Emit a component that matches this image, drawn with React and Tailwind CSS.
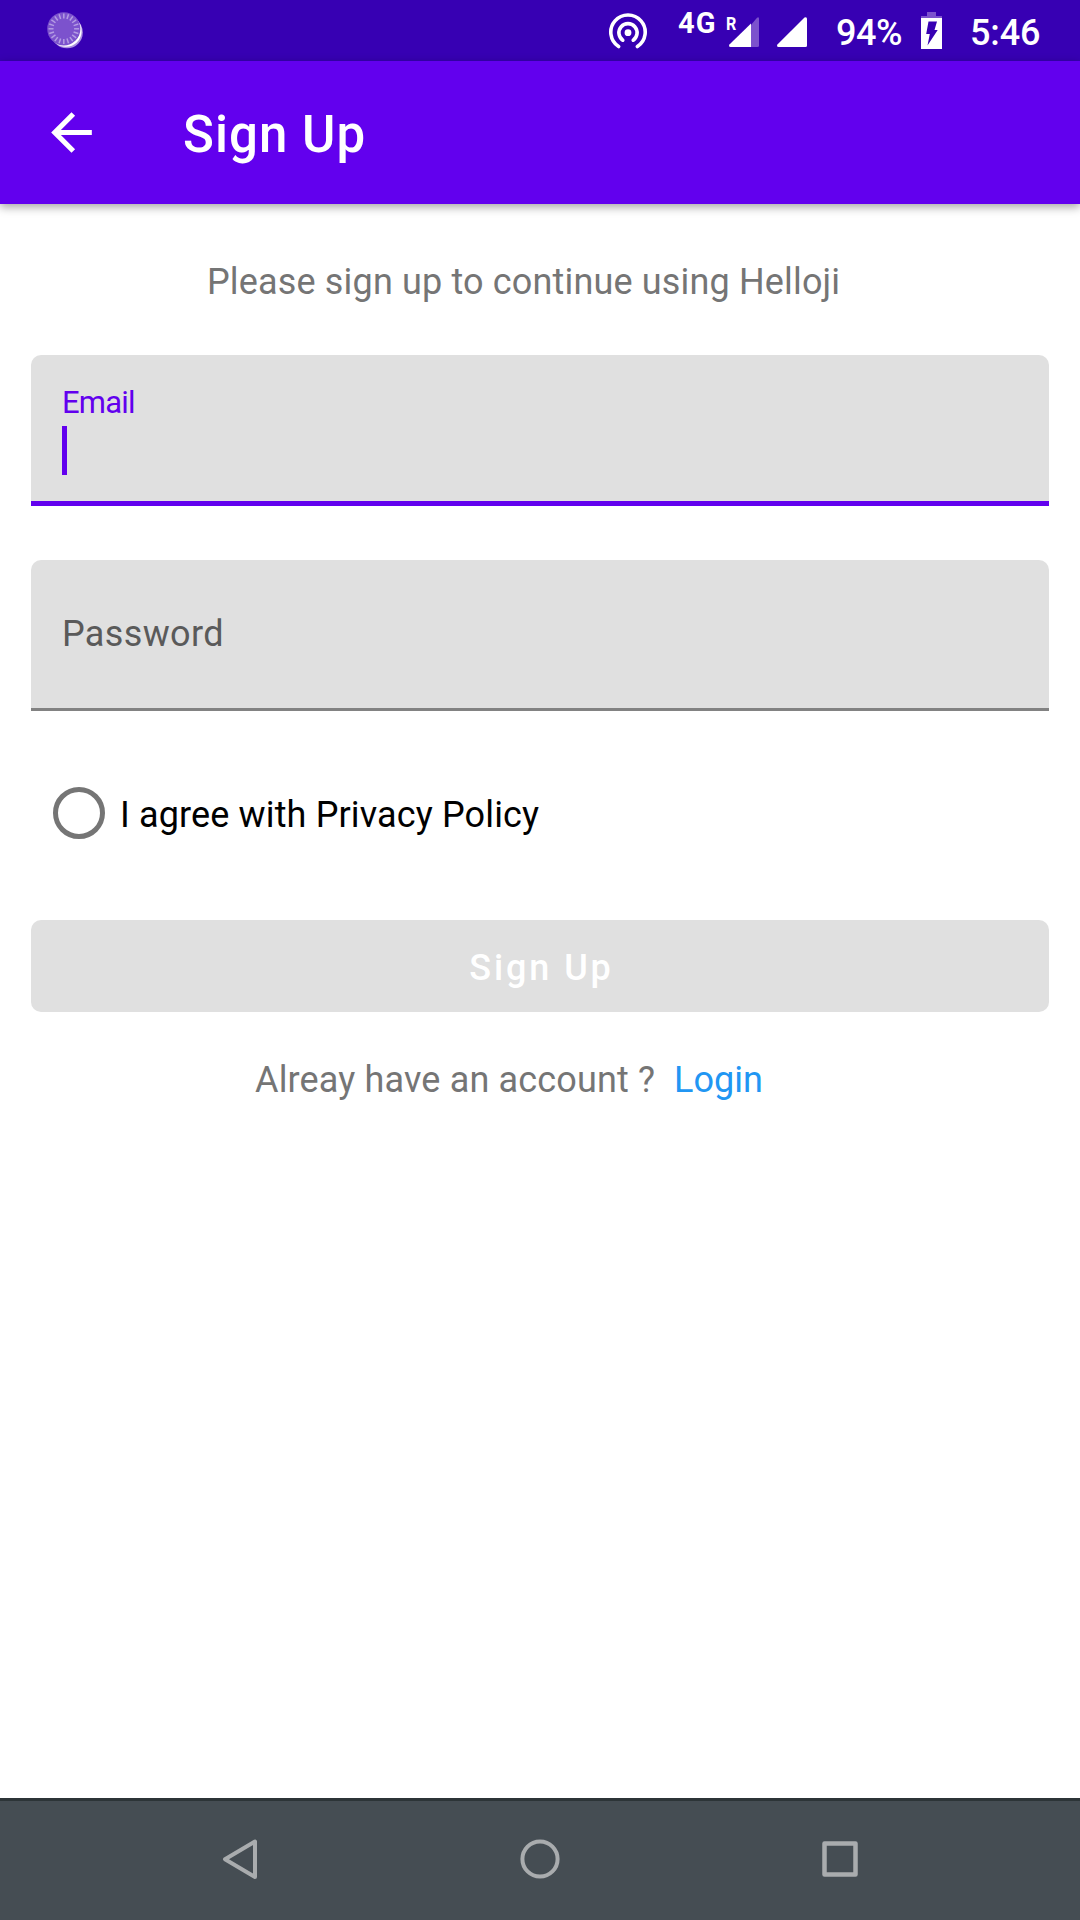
const TICKS = Array.from({ length: 20 }, (_, i) => i * 18);

function StatusBar() {
  return (
    <div className="flex h-[61px] shrink-0 items-start bg-[#3700b3] text-white">
      <svg className="ml-[44px] h-[61px] w-[44px]" viewBox="44 0 44 61">
        <circle cx="67" cy="32.5" r="15.8" fill="#ab8fe0" />
        <circle cx="65.8" cy="31" r="15.8" fill="#fff" />
        <circle cx="63.8" cy="28.8" r="16.6" fill="#7c52cd" />
        {TICKS.map((a) => (
          <line key={a} x1="63.8" y1="13.5" x2="63.8" y2="18.5" stroke="#b49ce3" strokeWidth="1.5" transform={`rotate(${a} 63.8 28.8)`} />
        ))}
      </svg>
      <svg className="ml-[520px] h-[61px] w-[40px]" viewBox="608 0 40 61" fill="none" stroke="#fff" strokeWidth="3.6" strokeLinecap="round">
        <circle cx="628" cy="32.7" r="3.4" fill="#fff" stroke="none" />
        <path d="M622.8 40.2a9.1 9.1 0 1 1 10.4 0" />
        <path d="M618.6 46.6a17.2 17.2 0 1 1 18.8 0" />
      </svg>
      <span className="mt-[8px] ml-[30px] w-[48px] text-[29px] leading-[30px] font-bold tracking-[1px]">4G</span>
      <span className="mt-[14px] w-[15px] origin-left scale-x-[.87] text-[18.5px] leading-[20px] font-bold">R</span>
      <svg className="-ml-[16px] h-[61px] w-[85px]" viewBox="725 0 85 61">
        <path d="M751 25L757 17.8q2-1.5 2 1V45.5q0 1.5-1.5 1.5H751z" fill="#7c52cd" />
        <path d="M751 23.5V47H730.5q-2.5-.5-.8-2.8z" fill="#fff" />
        <path d="M778.5 47q-2.5-.5-.8-2.8L804.5 17.5q2.5-1 2.5 1.3V45.5q0 1.5-1.5 1.5z" fill="#fff" />
      </svg>
      <span className="mt-[12px] ml-[26px] w-[84px] text-[36px] leading-[42px] font-medium tracking-[-.5px]">94%</span>
      <svg className="h-[61px] w-[22px]" viewBox="920 0 22 61">
        <path d="M927 12h9v4h6v2h-21v-2h6z" fill="#7c52cd" />
        <path d="M921 18h21v31h-21z" fill="#fff" />
        <path d="M928.5 21.5h8.5l-2.5 8.5h3.2L927.5 45.5l2.3-11.5h-3.6z" fill="#3700b3" />
      </svg>
      <span className="mt-[12px] ml-[28px] text-[36px] leading-[42px] font-medium tracking-[-.15px]">5:46</span>
    </div>
  );
}

function AppBar() {
  return (
    <header className="z-10 flex h-[143px] shrink-0 items-start bg-[#6200ee] text-white shadow-[0_3px_9px_rgba(0,0,0,.36)]">
      <button type="button" aria-label="Back" className="mt-[41px] ml-[41px] size-[61px]">
        <svg className="size-[61px]" viewBox="0 0 24 24" fill="currentColor">
          <path d="M20 11H7.83l5.59-5.59L12 4l-8 8 8 8 1.41-1.41L7.83 13H20z" />
        </svg>
      </button>
      <h1 className="mt-[44px] ml-[81px] text-[51px] leading-[60px] font-medium tracking-[1.05px]">Sign Up</h1>
    </header>
  );
}

export default function App() {
  return (
    <div className="flex h-[1920px] w-[1080px] flex-col overflow-hidden bg-white font-['Roboto',sans-serif] text-[36px] leading-[42px]">
      <StatusBar />
      <AppBar />
      <main className="flex grow flex-col px-[31px]">
        <p className="mt-[57px] ml-[176px] tracking-[.16px] text-[#757575]">Please sign up to continue using Helloji</p>

        <div className="mt-[52px] flex h-[151px] flex-col rounded-t-[10px] border-b-[5px] border-[#6200ee] bg-[#e0e0e0] px-[31px]">
          <label className="mt-[30px] text-[31px] leading-[36px] tracking-[-.8px] text-[#6200ee]">Email</label>
          <div className="mt-[5px] h-[49px] w-[5px] bg-[#6200ee]" />
        </div>

        <div className="mt-[54px] flex h-[156px] flex-col rounded-t-[10px] border-b-[3px] border-[#828282] bg-[#e0e0e0] px-[31px] max-h-[151px]">
          <label className="mt-[53px] tracking-[.35px] text-[#5a5a5a]">Password</label>
        </div>

        <label className="mt-[76px] ml-[22px] flex h-[52px] items-center">
          <span className="size-[52px] rounded-full border-[5px] border-[#757575]" />
          <span className="mt-[4px] ml-[15px] tracking-[.14px] text-black">I agree with Privacy Policy</span>
        </label>

        <button type="button" className="mt-[81px] flex h-[92px] items-start justify-center rounded-[10px] bg-[#e0e0e0] pt-[27px] pl-[3px] font-medium tracking-[2.9px] text-white">
          Sign Up
        </button>

        <p className="mt-[47px] ml-[224px] flex text-[#757575]">
          <span className="w-[419px] tracking-[.15px]">Alreay have an account ?</span>
          <a className="text-[#2196f3]">Login</a>
        </p>
      </main>

      <nav className="flex h-[122px] shrink-0 items-start border-t-[3px] border-[#2c3437] bg-[#454d53] pt-[36px]">
        <svg className="ml-[220px] h-[44px] w-[40px]" viewBox="220 1837 40 44" fill="none" stroke="#a9acae" strokeWidth="4" strokeLinejoin="round">
          <path d="M255 1841.5v35.5l-30-17.8z" />
        </svg>
        <svg className="ml-[258px] size-[44px]" viewBox="518 1837 44 44" fill="none" stroke="#a9acae" strokeWidth="4">
          <circle cx="540" cy="1859" r="17.6" />
        </svg>
        <svg className="ml-[256px] size-[44px]" viewBox="818 1837 44 44" fill="none" stroke="#a9acae" strokeWidth="4.5" strokeLinejoin="round">
          <path d="M824.5 1843.5h31v31h-31z" />
        </svg>
      </nav>
    </div>
  );
}
